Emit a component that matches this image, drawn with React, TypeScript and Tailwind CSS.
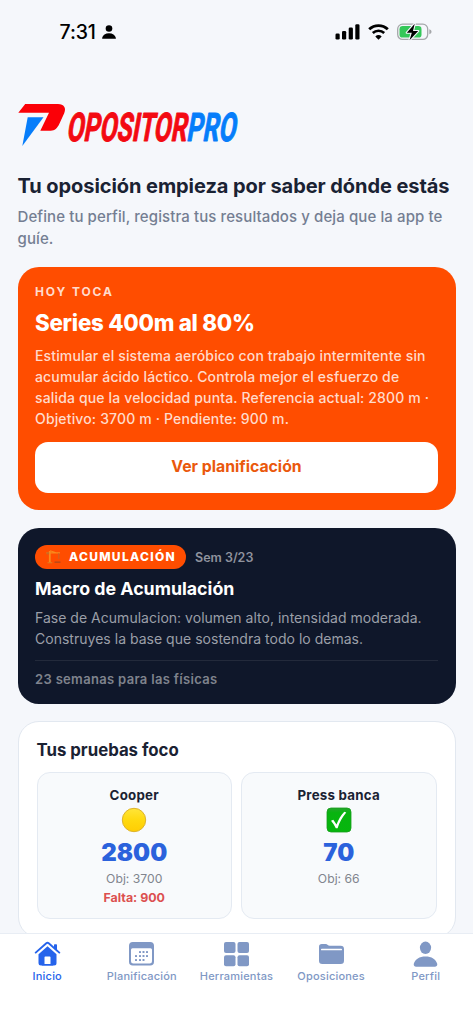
import React from "react";

type FocusTest = {
  name: string;
  value: string;
  goal: string;
  missing?: string;
  done: boolean;
};

const TESTS: FocusTest[] = [
  { name: "Cooper", value: "2800", goal: "3700", missing: "900", done: false },
  { name: "Press banca", value: "70", goal: "66", done: true },
];

function StatusBar() {
  return (
    <div className="flex h-16 shrink-0 items-center justify-between pl-[59.5px] pr-[41px] text-black">
      <div className="flex items-center gap-[6px]">
        <span className="text-[19.5px] font-medium leading-6 tracking-[-0.1px]">7:31</span>
        <svg width="14" height="14" viewBox="0 0 14 14" fill="currentColor">
          <circle cx="7" cy="3.5" r="3.3" />
          <path d="M0.6 13.7c-.5 0-.6-.4-.5-.8C.8 10 3.5 8.3 7 8.3s6.200 1.700 6.900 4.600c.1.400 0 .8-.5.8z" />
        </svg>
      </div>
      <div className="flex items-center gap-[8px]">
        <svg width="25" height="16" viewBox="0 0 25 16" fill="currentColor">
          <rect x="0.500" y="9.500" width="4.200" height="6" rx="1.300" />
          <rect x="7" y="7" width="4.200" height="8.500" rx="1.300" />
          <rect x="13.700" y="3.500" width="4.200" height="12" rx="1.300" />
          <rect x="20.300" y="0.200" width="4.200" height="15.300" rx="1.300" />
        </svg>
        <svg width="21" height="16" viewBox="0 0 21 16">
          <path d="M1.200 5.300a13.400 13.400 0 0 1 18.600 0" fill="none" stroke="currentColor" strokeWidth="2.800" />
          <path d="M4.800 9a8.300 8.300 0 0 1 11.400 0" fill="none" stroke="currentColor" strokeWidth="2.600" />
          <path d="M10.500 15.700 7.300 12.400a4.700 4.700 0 0 1 6.400 0z" fill="currentColor" />
        </svg>
        <svg width="35" height="18" viewBox="0 0 35 18">
          <rect x="0.700" y="1.200" width="30" height="15.200" rx="4.800" fill="none" stroke="#a5a7aa" strokeWidth="1.300" />
          <path d="M32.300 6.300c1.500.5 2.200 1.500 2.200 2.500s-.7 2-2.200 2.500z" fill="#a5a7aa" />
          <rect x="2.500" y="3" width="22" height="11.600" rx="3.200" fill="#34c759" />
          <path
            d="M17.700.8 9.800 9.700h5l-2.300 7.500 8.700-9.200h-5.200z"
            fill="#000"
            stroke="#f5f7fb"
            strokeWidth="2.200"
            paintOrder="stroke"
            strokeLinejoin="round"
          />
        </svg>
      </div>
    </div>
  );
}

function Logo() {
  return (
    <svg width="236" height="52" viewBox="0 0 236 52" className="block overflow-visible">
      <path
        d="M7.200 1H40c6 0 8.500 4 6.200 9.200l-4.800 10.600c-2.300 4.800-4.500 6.900-8.700 6.900H22.300L31 9.700H0.300z"
        fill="#fb0007"
      />
      <path d="M9.700 14.300H25.500L4.300 43z" fill="#067dfa" />
      <g
        transform="translate(48 37.600) skewX(-10)"
        fontFamily="Roboto"
        fontWeight="700"
        fontSize="39.5"
        strokeWidth="1"
        strokeLinejoin="round"
      >
        <text x="0" y="0" textLength="120" lengthAdjust="spacingAndGlyphs" fill="#f30a12" stroke="#f30a12">
          OPOSITOR
        </text>
        <text x="120" y="0" textLength="49" lengthAdjust="spacingAndGlyphs" fill="#067dfa" stroke="#067dfa">
          PRO
        </text>
      </g>
    </svg>
  );
}

function CraneIcon() {
  return (
    <svg width="16" height="14" viewBox="0 0 16 14" fill="none">
      <path d="M3.800 1v12" stroke="#f98a1c" strokeWidth="1.800" />
      <path d="M0.500 2.800h13.500M4 .8l6 2" stroke="#f98a1c" strokeWidth="1.200" />
      <path d="M0.500 2.200h2.600v2.200H.5z" fill="#c96a25" />
      <path d="M12.800 3v6" stroke="#b9692f" strokeWidth=".8" />
      <path d="M8.500 11.500h6v1.300h-6z" fill="#b0491b" />
      <path d="M1.500 12.700h4.800" stroke="#e07a20" strokeWidth="1.200" />
    </svg>
  );
}

function TodayCard() {
  return (
    <section className="mt-[17px] rounded-[21px] bg-[#ff4d00] px-[17.500px] pb-[17.500px] pt-[16px] text-white">
      <p className="text-[12px] font-bold leading-[17px] tracking-[1.900px] text-[#ffdbcc]">HOY TOCA</p>
      <h2 className="mt-[9px] text-[22.300px] font-extrabold leading-7 tracking-[-0.250px]">Series 400m al 80%</h2>
      <p className="mt-[9px] whitespace-nowrap text-[14px] font-medium leading-[20.900px] tracking-[0.150px] text-[#ffdbcc]">
        Estimular el sistema aeróbico con trabajo intermitente sin
        <br />
        acumular ácido láctico. Controla mejor el esfuerzo de
        <br />
        salida que la velocidad punta. Referencia actual: 2800 m ·
        <br />
        Objetivo: 3700 m · Pendiente: 900 m.
      </p>
      <button className="mt-[12px] block h-[51px] w-full rounded-[13px] bg-white text-[15.800px] font-bold text-[#ea580c]">
        Ver planificación
      </button>
    </section>
  );
}

function MacroCard() {
  return (
    <section className="mt-[18px] h-[175.500px] rounded-[21px] bg-[#0f172a] px-[17.500px] pt-[17px]">
      <div className="flex h-[24px] items-center gap-[9px]">
        <span className="flex h-[24px] w-[151px] items-center gap-[7px] rounded-full bg-[#ff4d00] pl-[11px] text-white">
          <CraneIcon />
          <span className="text-[12px] font-extrabold tracking-[1.300px]">ACUMULACIÓN</span>
        </span>
        <span className="pt-[1px] text-[12.500px] font-semibold leading-5 text-[#8f939e]">Sem 3/23</span>
      </div>
      <h2 className="mt-[8px] text-[17.800px] font-bold leading-6 text-white">Macro de Acumulación</h2>
      <p className="mt-[6px] whitespace-nowrap text-[14px] leading-[21px] tracking-[0.020px] text-[#9b9fa8]">
        Fase de Acumulacion: volumen alto, intensidad moderada.
        <br />
        Construyes la base que sostendra todo lo demas.
      </p>
      <div className="mt-[11px] border-t border-[#232a3b] pt-[9px] text-[13px] font-semibold leading-[18px] tracking-[0.330px] text-[#7f838d]">
        23 semanas para las físicas
      </div>
    </section>
  );
}

function StatusIcon({ done }: { done: boolean }) {
  if (done) {
    return (
      <svg width="26" height="26" viewBox="0 0 26 26">
        <defs>
          <linearGradient id="ok" x1="0" y1="0" x2="0" y2="1">
            <stop offset="0" stopColor="#25a52b" />
            <stop offset=".2" stopColor="#08b410" />
            <stop offset="1" stopColor="#06b60d" />
          </linearGradient>
        </defs>
        <rect x="1" y="1" width="24" height="24" rx="4" fill="url(#ok)" stroke="#169c1c" strokeWidth=".8" />
        <path d="M5 13.800 7.300 12.700l3.200 4.800C12.300 12.800 15 8.200 18.300 4.800l2 .8C16.500 10 13.500 15.200 11.600 21.300H9.800C8.500 18.500 6.900 16 5 13.800z" fill="#fff" />
      </svg>
    );
  }
  return (
    <svg width="26" height="26" viewBox="0 0 26 26">
      <defs>
        <linearGradient id="pending" x1="0" y1="0" x2="0" y2="1">
          <stop offset="0" stopColor="#ffe53a" />
          <stop offset=".5" stopColor="#ffd90f" />
          <stop offset="1" stopColor="#ffcd03" />
        </linearGradient>
      </defs>
      <circle cx="13" cy="13" r="11.700" fill="url(#pending)" stroke="#ddb32c" strokeWidth="1" />
    </svg>
  );
}

function FocusCard() {
  return (
    <section className="mt-[17.500px] h-[217px] shrink-0 rounded-[21px] border border-[#e2e8f0] bg-white px-[18px] pt-[16px]">
      <h2 className="text-[16.800px] font-bold leading-6 text-[#1a2233]">Tus pruebas foco</h2>
      <div className="mt-[10px] grid grid-cols-2 gap-[9px]">
        {TESTS.map((t) => (
          <div
            key={t.name}
            className="flex h-[147px] flex-col items-center rounded-[13px] border border-[#e4eaf2] bg-[#f8fafc] pt-[13px]"
          >
            <span className="text-[13.300px] font-bold leading-[18px] tracking-[0.250px] text-[#1a2233]">{t.name}</span>
            <span className="mt-[3px]">
              <StatusIcon done={t.done} />
            </span>
            <span className="mt-[4px] block text-[24px] font-black leading-[32px] text-[#2b62dc]">{t.value}</span>
            <span className="mt-[2px] text-[12.200px] leading-[16px] text-[#81858e]">Obj: {t.goal}</span>
            {t.missing && (
              <span className="mt-[3px] text-[12.400px] font-bold leading-[16px] text-[#dc5050]">Falta: {t.missing}</span>
            )}
          </div>
        ))}
      </div>
    </section>
  );
}

function HomeIcon() {
  return (
    <svg width="27" height="26" viewBox="0 0 27 26" fill="currentColor">
      <path d="M1.700 11.600 12.300 2.200a1.800 1.800 0 0 1 2.400 0L25.300 11.600" fill="none" stroke="currentColor" strokeWidth="1.900" strokeLinecap="round" />
      <path d="M20 4a.7.7 0 0 1 .7-.7h1.600a.7.7 0 0 1 .7.7v6.500L20 7.500z" />
      <path d="M13.500 5.300 22.500 13.300V22a2.500 2.500 0 0 1-2.500 2.500H7A2.500 2.500 0 0 1 4.500 22v-8.700z" />
      <path d="M10.500 24.500v-8.200a.8.8 0 0 1 .8-.8h4.400a.8.8 0 0 1 .8.8v6.700h-6z" fill="#fff" />
      <path d="M8 23h11v1.500H8z" />
    </svg>
  );
}

function CalendarIcon() {
  const dots = [
    [12, 11], [15.500, 11], [19, 11],
    [8, 15], [12, 15], [15.500, 15], [19, 15],
    [8, 19], [12, 19], [15.500, 19],
  ];
  return (
    <svg width="27" height="26" viewBox="0 0 27 26" fill="currentColor">
      <path
        fillRule="evenodd"
        d="M4.800 1h17.400A3.800 3.800 0 0 1 26 4.800v16a3.800 3.800 0 0 1-3.800 3.800H4.800A3.800 3.800 0 0 1 1 20.800v-16A3.800 3.800 0 0 1 4.800 1zM3 8.800v11.500a2.300 2.300 0 0 0 2.300 2.300h16.400a2.300 2.300 0 0 0 2.300-2.300V8.800A1.500 1.500 0 0 0 22.500 7.300h-18A1.500 1.500 0 0 0 3 8.800z"
      />
      {dots.map(([x, y]) => (
        <rect key={`${x}-${y}`} x={x - 1} y={y - 1} width="2" height="2" rx=".6" />
      ))}
    </svg>
  );
}

function GridIcon() {
  return (
    <svg width="27" height="26" viewBox="0 0 27 26" fill="currentColor">
      <rect x="1" y="1" width="11.500" height="11" rx="2" />
      <rect x="14.500" y="1" width="11.500" height="11" rx="2" />
      <rect x="1" y="14.300" width="11.500" height="11" rx="2" />
      <rect x="14.500" y="14.300" width="11.500" height="11" rx="2" />
    </svg>
  );
}

function FolderIcon() {
  return (
    <svg width="27" height="26" viewBox="0 0 27 26" fill="currentColor">
      <path d="M1 5.800A2.800 2.800 0 0 1 3.800 3h3.700c2.300 0 2.300 1.800 4.300 1.800h10.900A3.300 3.300 0 0 1 26 8v11.700a3.300 3.300 0 0 1-3.300 3.300H4.300A3.300 3.300 0 0 1 1 19.700z" />
      <path d="M3.800 8.500h19.400" stroke="#fff" strokeWidth="1.700" strokeLinecap="round" />
    </svg>
  );
}

function PersonIcon() {
  return (
    <svg width="27" height="26" viewBox="0 0 27 26" fill="currentColor">
      <ellipse cx="13.500" cy="6.800" rx="5.600" ry="6.200" />
      <path d="M4.200 25.700c-1.900 0-2.800-1.200-2.400-2.900C3 18.200 7.500 15.500 13.500 15.500s10.500 2.700 11.700 7.300c.4 1.700-.5 2.900-2.400 2.900z" />
    </svg>
  );
}

const NAV = [
  { label: "Inicio", icon: HomeIcon, active: true },
  { label: "Planificación", icon: CalendarIcon },
  { label: "Herramientas", icon: GridIcon },
  { label: "Oposiciones", icon: FolderIcon },
  { label: "Perfil", icon: PersonIcon },
];

function BottomNav() {
  return (
    <nav className="grid h-[91px] shrink-0 grid-cols-5 items-start border-t border-[#e8edf4] bg-white pt-[7px]">
      {NAV.map(({ label, icon: Icon, active }) => (
        <a
          key={label}
          className={
            active
              ? "flex flex-col items-center gap-[2px] text-[#2563eb]"
              : "flex flex-col items-center gap-[2px] text-[#8098c5]"
          }
        >
          <Icon />
          <span className="text-[11px] font-medium leading-[15px] tracking-[0.200px]">{label}</span>
        </a>
      ))}
    </nav>
  );
}

export default function App() {
  return (
    <div className="flex h-[1024px] w-[473px] flex-col overflow-hidden bg-[#f5f7fb] font-['Inter',sans-serif]">
      <StatusBar />
      <main className="min-h-0 flex-1 overflow-hidden px-[17.500px] pt-[39px]">
        <Logo />
        <h1 className="mt-[17px] whitespace-nowrap text-[20px] font-bold leading-7 tracking-[-0.070px] text-[#1a2233]">
          Tu oposición empieza por saber dónde estás
        </h1>
        <p className="mt-[6px] whitespace-nowrap text-[15px] font-medium leading-[22px] tracking-[0.100px] text-[#747e92]">
          Define tu perfil, registra tus resultados y deja que la app te
          <br />
          guíe.
        </p>
        <TodayCard />
        <MacroCard />
        <FocusCard />
      </main>
      <BottomNav />
    </div>
  );
}
